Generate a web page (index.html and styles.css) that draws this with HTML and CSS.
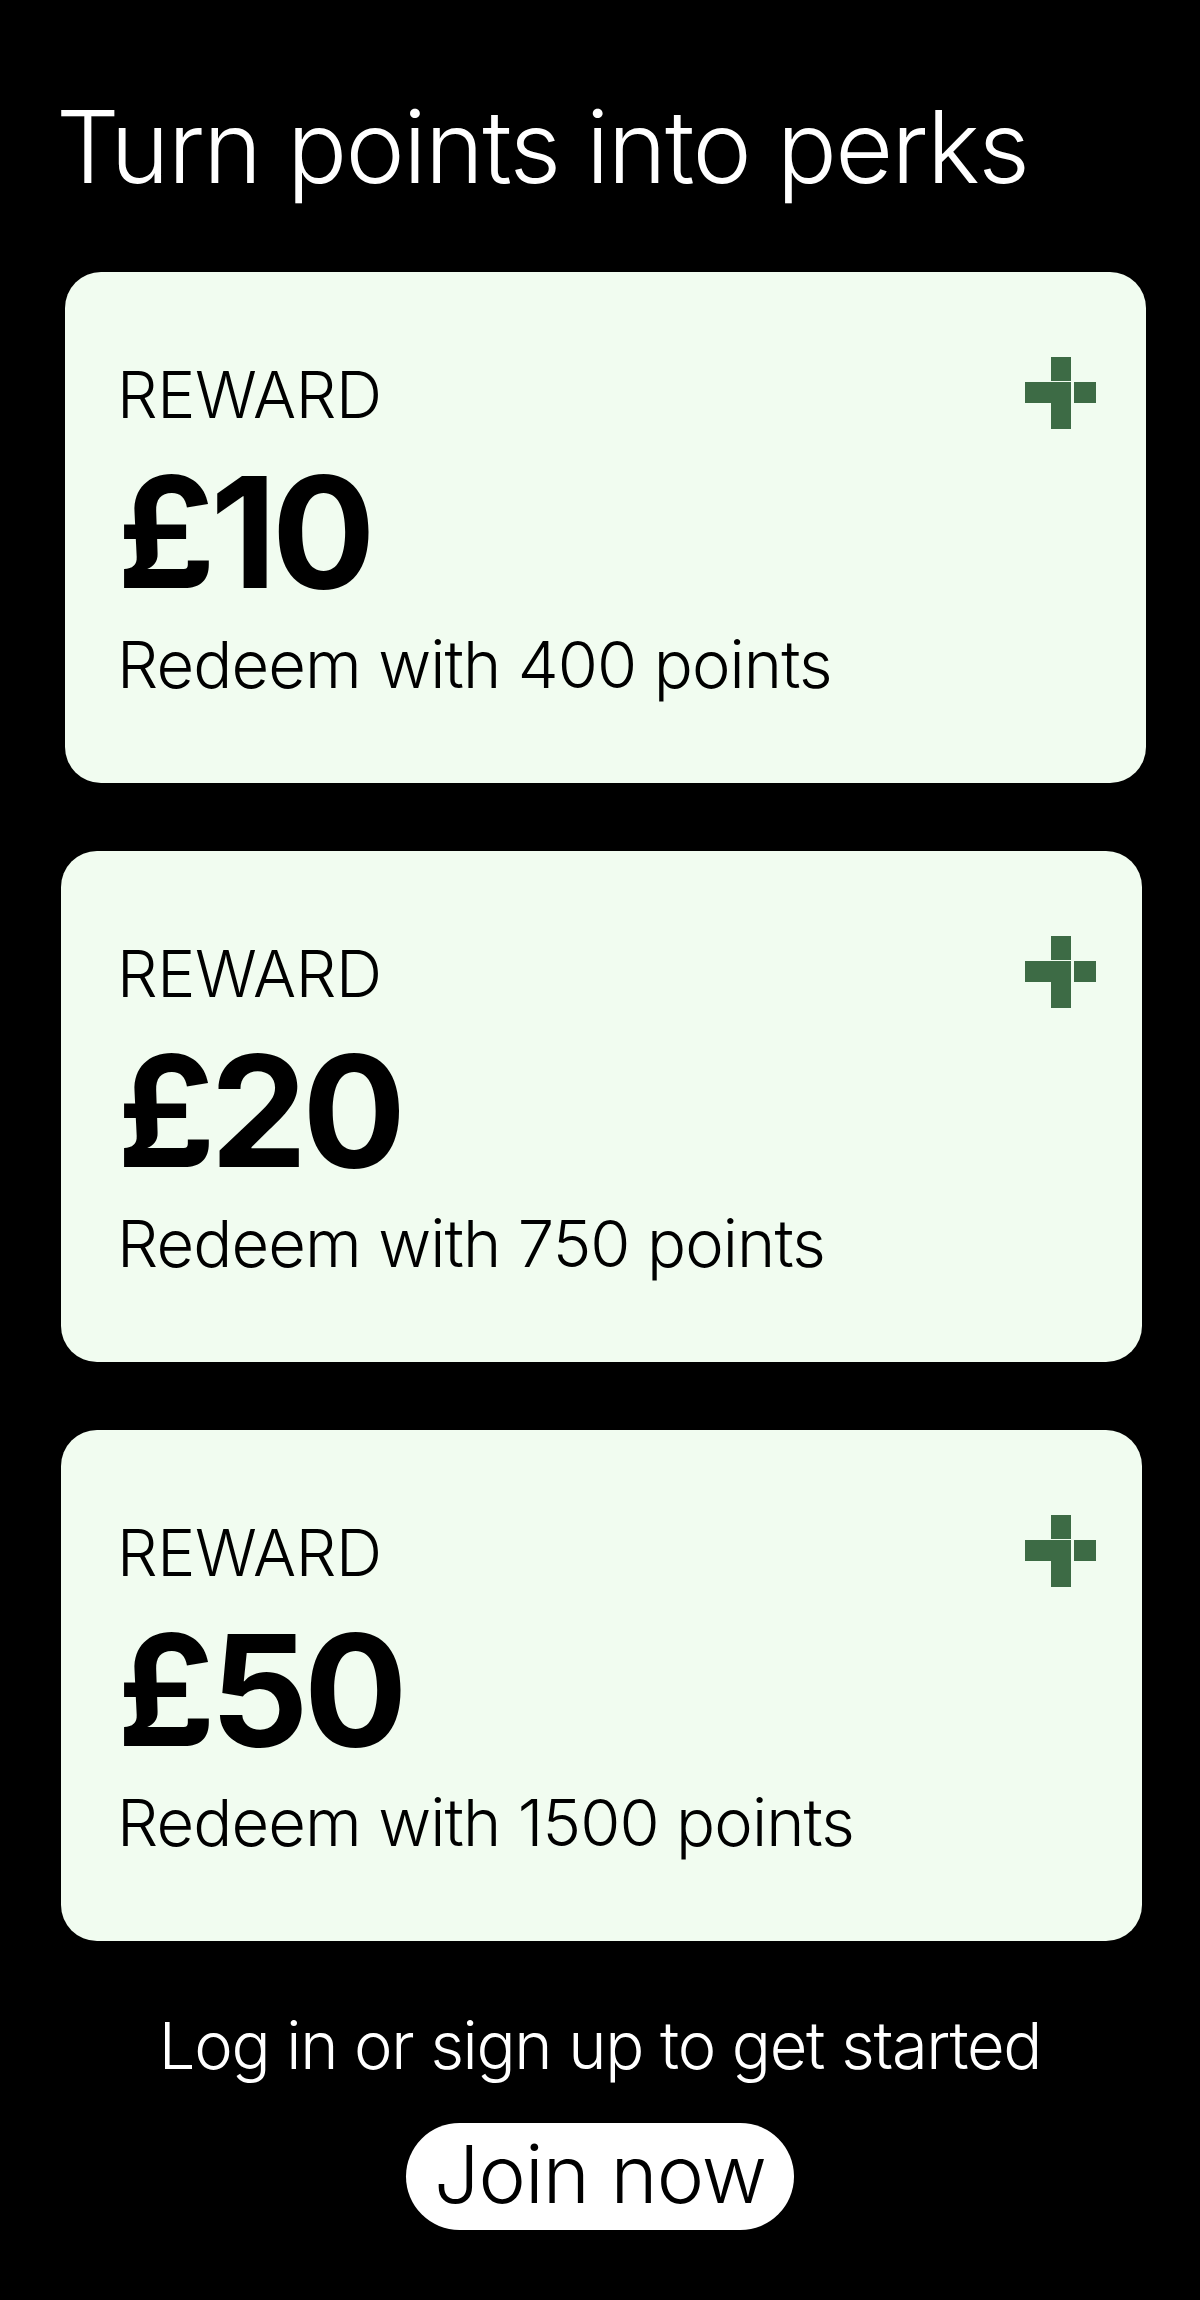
FILE: index.html
```html
<!DOCTYPE html>
<html lang="en">
<head>
    <meta charset="UTF-8">
    <meta name="viewport" content="width=device-width, initial-scale=1.0">
    <title>Turn points into perks</title>
    <link rel="stylesheet" href="styles.css">
</head>
<body>
    <h1 class="title">Turn points into perks</h1>

    <div class="rewards">
        <div class="card card-first">
            <div class="card-text">
                <div class="label">REWARD</div>
                <div class="amount">£10</div>
                <div class="cost">Redeem with 400 points</div>
            </div>
            <svg class="plus" width="72" height="72" viewBox="0 0 72 72">
                <rect x="26" y="0" width="20" height="24" />
                <rect x="0" y="25" width="46" height="21" />
                <rect x="26" y="25" width="20" height="47" />
                <rect x="49" y="25" width="22" height="21" />
            </svg>
        </div>

        <div class="card">
            <div class="card-text">
                <div class="label">REWARD</div>
                <div class="amount">£20</div>
                <div class="cost">Redeem with 750 points</div>
            </div>
            <svg class="plus" width="72" height="72" viewBox="0 0 72 72">
                <rect x="26" y="0" width="20" height="24" />
                <rect x="0" y="25" width="46" height="21" />
                <rect x="26" y="25" width="20" height="47" />
                <rect x="49" y="25" width="22" height="21" />
            </svg>
        </div>

        <div class="card">
            <div class="card-text">
                <div class="label">REWARD</div>
                <div class="amount">£50</div>
                <div class="cost">Redeem with 1500 points</div>
            </div>
            <svg class="plus" width="72" height="72" viewBox="0 0 72 72">
                <rect x="26" y="0" width="20" height="24" />
                <rect x="0" y="25" width="46" height="21" />
                <rect x="26" y="25" width="20" height="47" />
                <rect x="49" y="25" width="22" height="21" />
            </svg>
        </div>
    </div>

    <div class="cta">
        <p class="cta-text">Log in or sign up to get started</p>
        <button class="join">Join now</button>
    </div>
</body>
</html>
```

FILE: styles.css
```css
body {
    margin: 0;
    min-height: 2300px;
    background: #000;
    color: #fff;
    font-family: Inter, "Noto Sans", sans-serif;
}

.title {
    margin: 87px 0 0 56px;
    font-size: 100px;
    font-weight: 300;
    line-height: 120px;
    letter-spacing: -1.6px;
}

.rewards {
    display: flex;
    flex-direction: column;
    gap: 68px;
    margin-top: 65px;
}

.card {
    width: 1081px;
    height: 511px;
    box-sizing: border-box;
    margin-left: 61px;
    padding: 84px 45px 0 56px;
    display: flex;
    justify-content: space-between;
    align-items: flex-start;
    background: #f1fcf0;
    color: #000;
    border-radius: 36px;
}

.card-first {
    margin-left: 65px;
    padding: 84px 49px 0 52px;
}

.label {
    font-size: 64px;
    font-weight: 300;
    line-height: 77px;
    letter-spacing: -0.3px;
}

.amount {
    margin-top: 22px;
    font-size: 154px;
    font-weight: 700;
    line-height: 154px;
    letter-spacing: -5px;
}

.cost {
    margin-top: 17px;
    font-size: 65px;
    font-weight: 300;
    line-height: 78px;
    letter-spacing: -0.9px;
}

.plus {
    margin-top: 1px;
    fill: #3d6b45;
}

.cta {
    display: flex;
    flex-direction: column;
    align-items: center;
    margin-top: 66px;
}

.cta-text {
    margin: 0;
    font-size: 65px;
    font-weight: 300;
    line-height: 78px;
    letter-spacing: -1.3px;
}

.join {
    margin-top: 38px;
    padding: 3px 28px 8px;
    border: none;
    border-radius: 54px;
    background: #fff;
    color: #000;
    font-family: Inter, "Noto Sans", sans-serif;
    font-size: 80px;
    font-weight: 300;
    line-height: 96px;
    letter-spacing: -0.9px;
}
```
